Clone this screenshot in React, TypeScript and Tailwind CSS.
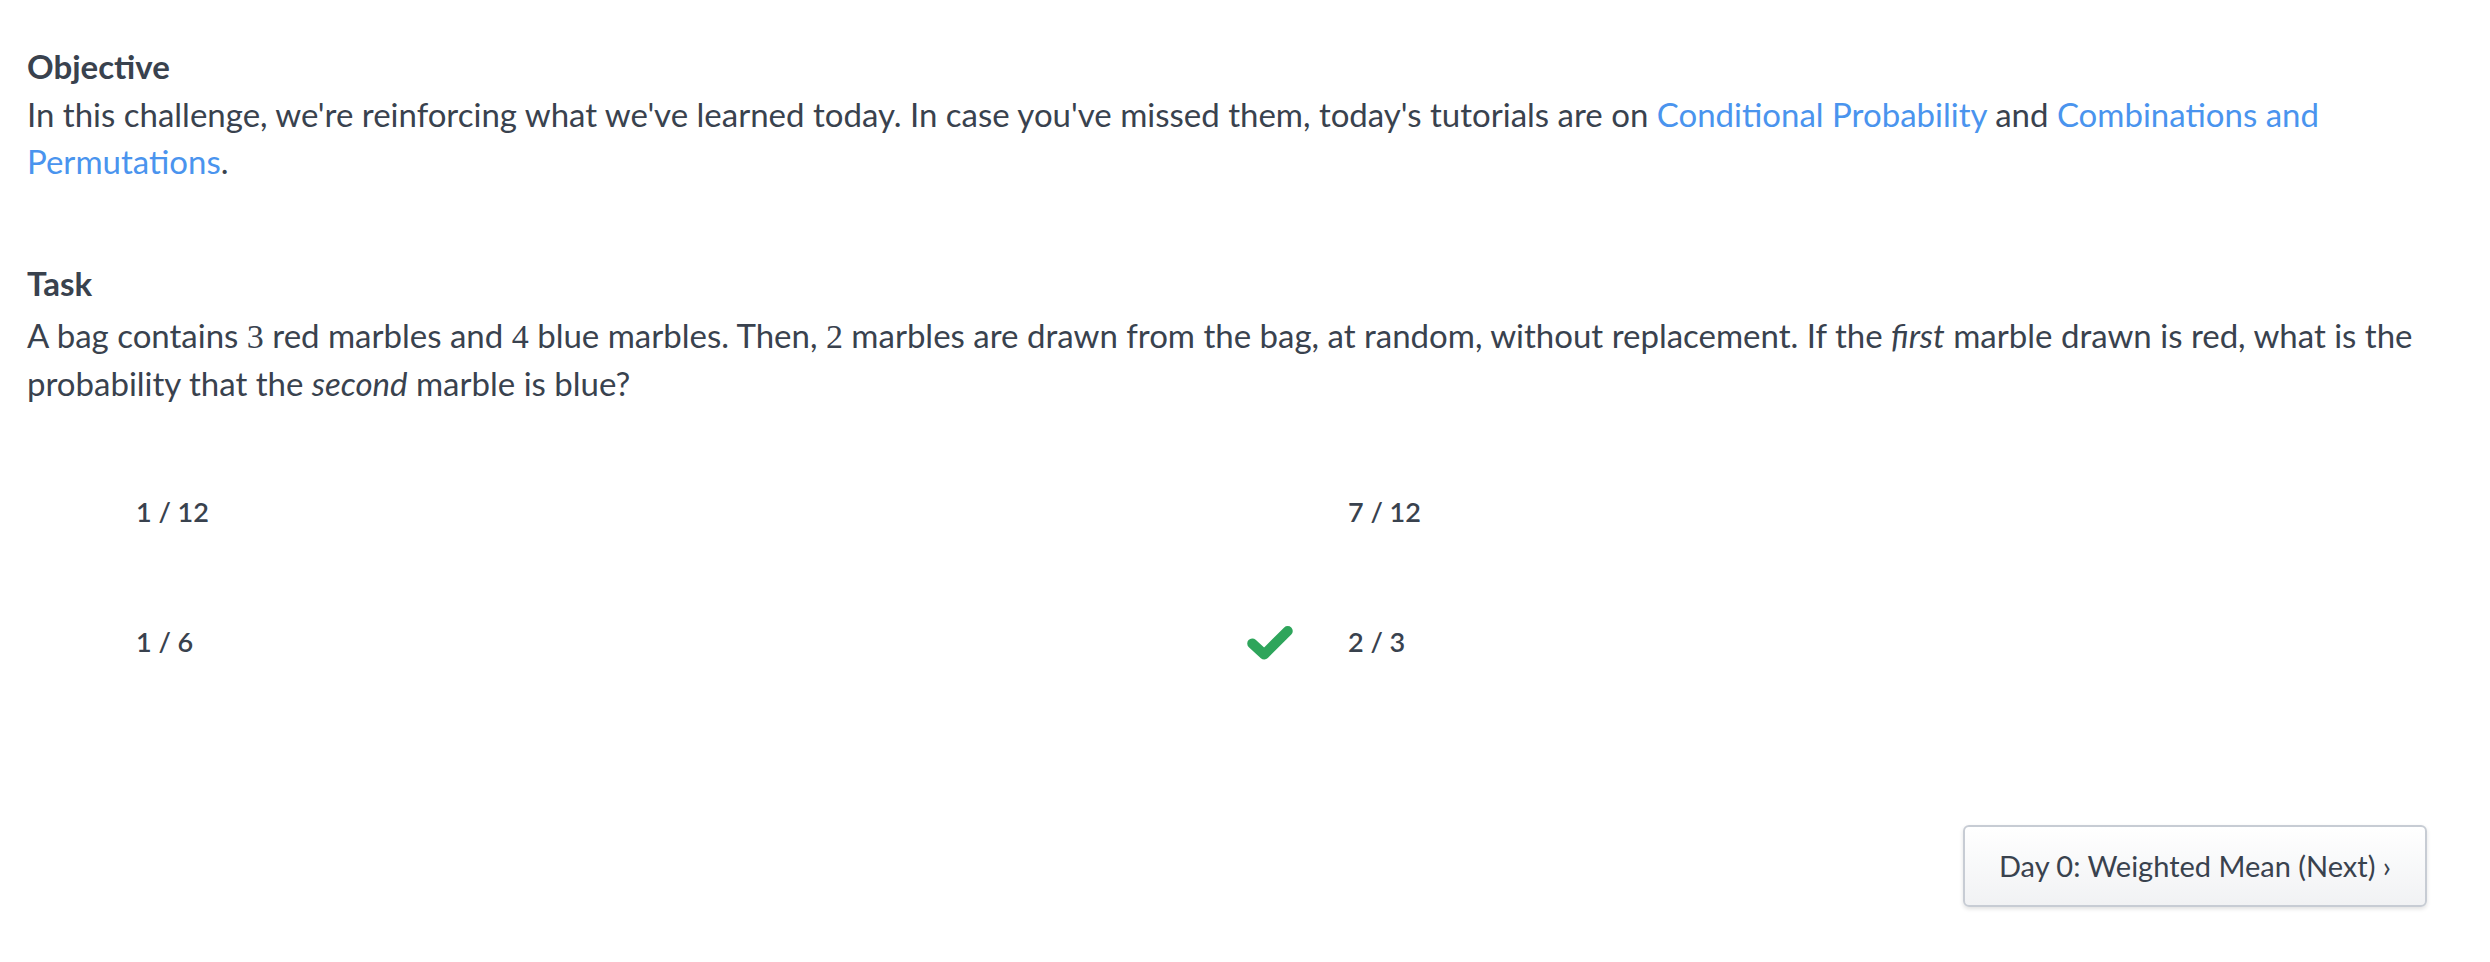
import React from "react";

const font = { fontFamily: "Lato, 'Open Sans', sans-serif" };

const M = ({ children }: { children: React.ReactNode }) => (
  <span className="font-['Liberation_Serif',serif] text-[34px] leading-none">{children}</span>
);

const Check = () => (
  <svg width="46" height="35" viewBox="0 0 48 36" fill="none">
    <polyline points="5.5,19 18,30.5 42.5,6" stroke="#2ea55b" strokeWidth="10.5" strokeLinecap="round" strokeLinejoin="round" />
  </svg>
);

const options = [
  { label: "1 / 12", correct: false },
  { label: "7 / 12", correct: false },
  { label: "1 / 6", correct: false },
  { label: "2 / 3", correct: true },
];

export default function App() {
  return (
    <div className="min-h-screen bg-white text-[#39424e] pt-[46px] pl-[27px]" style={font}>
      <h3 className="text-[33px] font-bold leading-[40px]">Objective</h3>
      <p className="mt-[5px] w-[2424px] text-[33px] leading-[47px]">
        In this challenge, we're reinforcing what we've learned today. In case you've missed them, today's tutorials are on{" "}
        <a className="text-[#4a94ee]">Conditional Probability</a> and{" "}
        <a className="text-[#4a94ee]">Combinations and Permutations</a>.
      </p>

      <h3 className="mt-[78px] text-[33px] font-bold leading-[40px]">Task</h3>
      <p className="mt-[8px] w-[2424px] text-[33px] leading-[48px]">
        A bag contains <M>3</M> red marbles and <M>4</M> blue marbles. Then, <M>2</M> marbles are drawn from the bag, at random, without replacement. If the <em>first</em> marble drawn is red, what is the probability that the <em>second</em> marble is blue?
      </p>

      <div className="mt-[40px] grid w-[2424px] grid-cols-2">
        {options.map((o) => (
          <div key={o.label} className="flex h-[130px] items-center">
            <div className="flex w-[109px] items-center pl-[8px]">{o.correct && <Check />}</div>
            <span className="text-[27px] font-semibold leading-[40px]">{o.label}</span>
          </div>
        ))}
      </div>

      <div className="mt-[118px] flex w-[2400px] justify-end">
        <button className="flex h-[82px] items-center rounded-[6px] border-2 border-[#c7ccd4] bg-gradient-to-b from-white to-[#f1f2f4] px-[34px] text-[29px] text-[#39424e] shadow-[0_2px_4px_rgba(0,0,0,0.12)]">
          Day 0: Weighted Mean (Next) ›
        </button>
      </div>
    </div>
  );
}
